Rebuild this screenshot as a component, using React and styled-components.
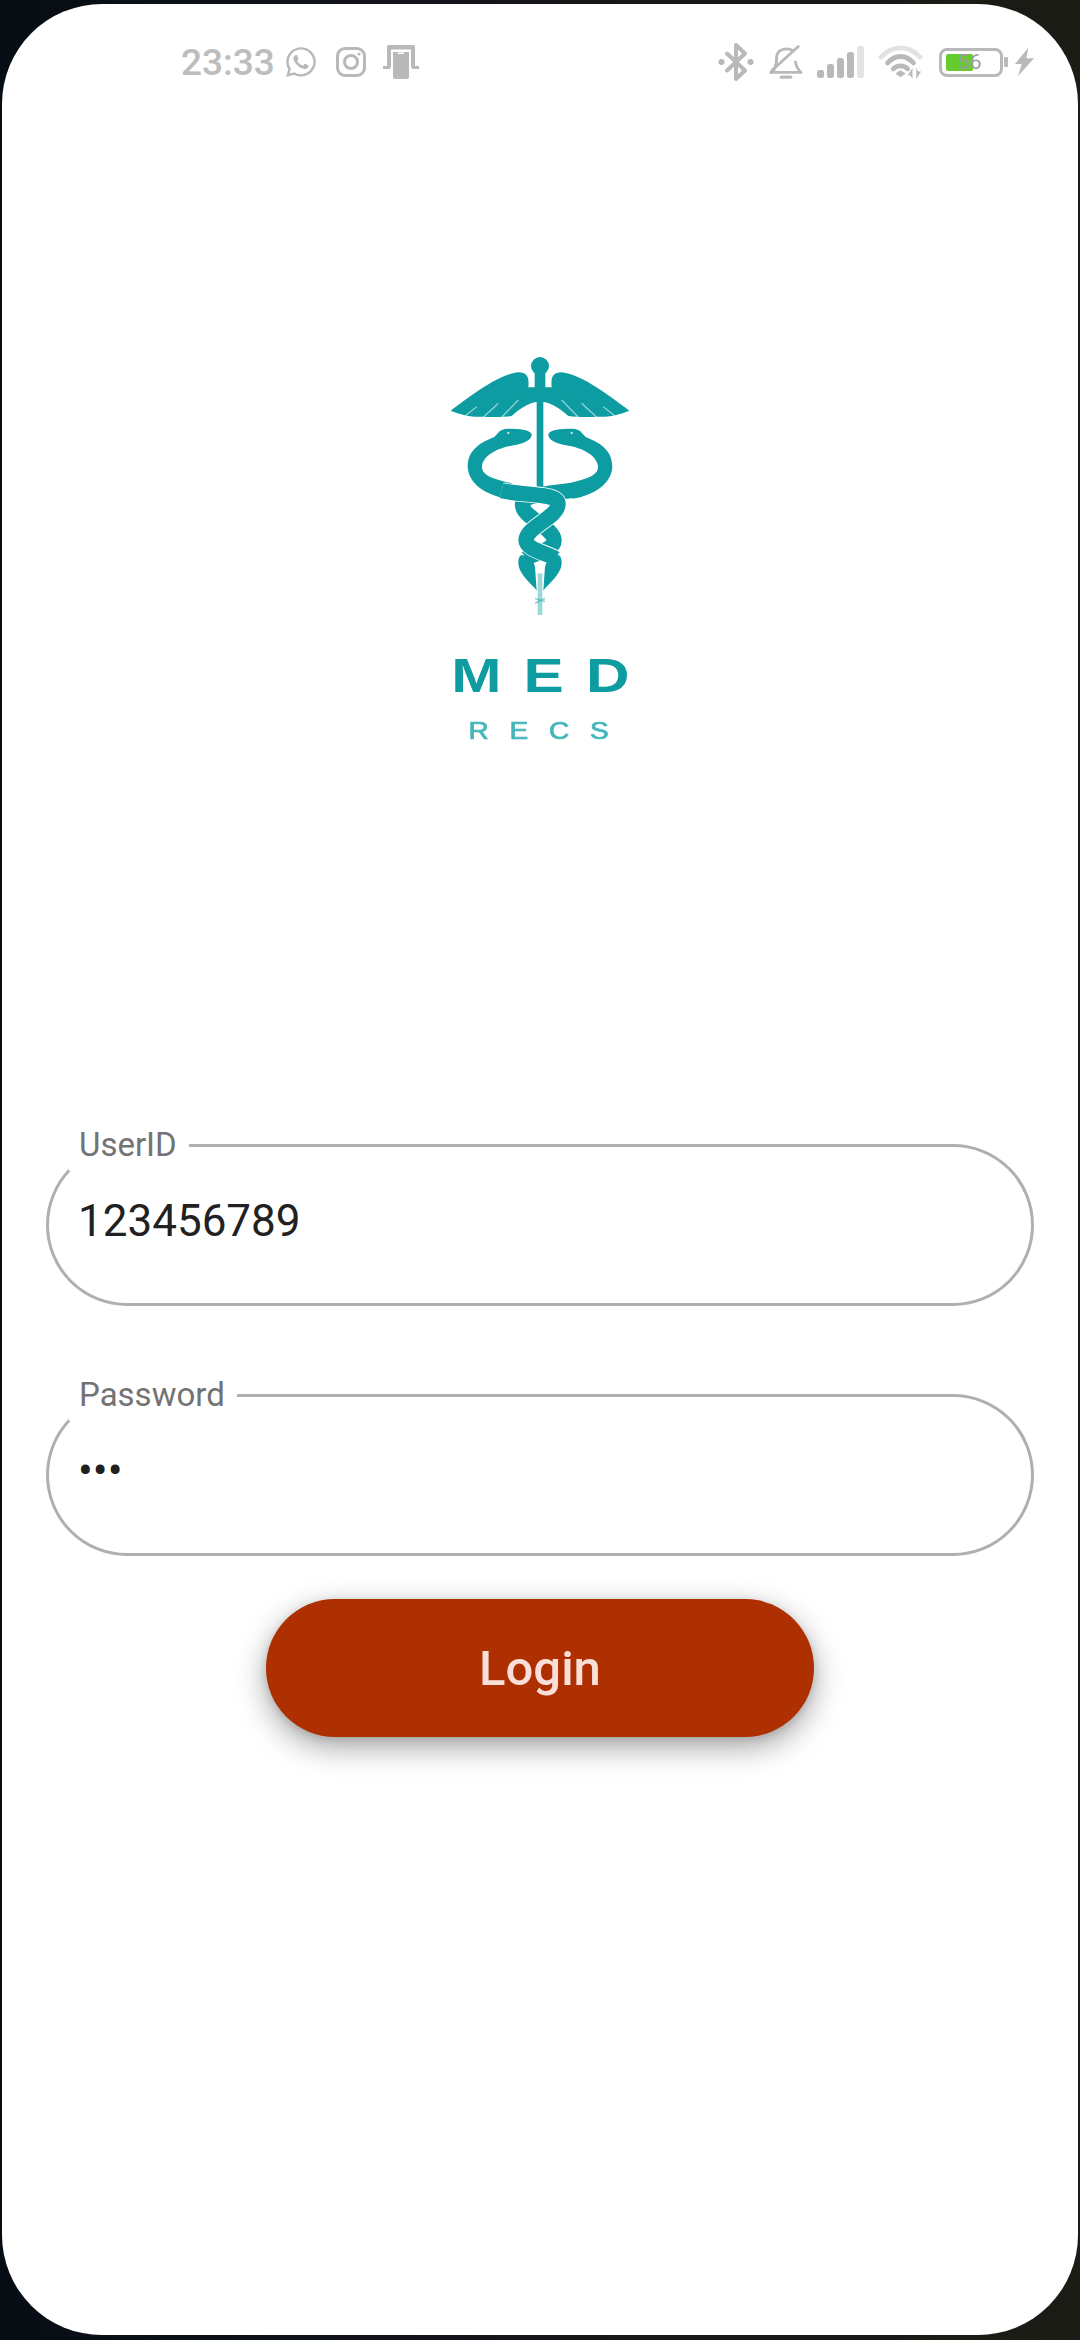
import React from 'react';
import styled, { createGlobalStyle } from 'styled-components';
import { FaWhatsapp } from 'react-icons/fa';

const GlobalStyle = createGlobalStyle`
  html, body {
    margin: 0;
    padding: 0;
    background: #111;
  }
`;

const Phone = styled.div`
  width: 1080px;
  height: 2340px;
  box-sizing: border-box;
  padding: 4px 2px 5px 2px;
  background: linear-gradient(90deg, #070d14 0%, #13151a 40%, #1c1b15 100%);
  font-family: Roboto, 'Liberation Sans', sans-serif;
  overflow: hidden;
`;

const Screen = styled.div`
  height: 100%;
  background: #fff;
  border-radius: 100px;
  display: flex;
  flex-direction: column;
  overflow: hidden;
`;

const StatusBar = styled.div`
  height: 116px;
  flex: none;
  padding: 0 44px 0 179px;
  display: flex;
  align-items: center;
  justify-content: space-between;
  color: #b9b9b9;
`;

const StatusGroup = styled.div`
  display: flex;
  align-items: center;
`;

const Time = styled.span`
  font-size: 37px;
  font-weight: 500;
  margin-right: 9px;
  color: #bdbdbd;
`;

const IconSlot = styled.span`
  display: flex;
  margin-left: ${p => p.$left || 0}px;
  color: #b9b9b9;
`;

const Battery = styled.div`
  position: relative;
  width: 64px;
  height: 29px;
  box-sizing: border-box;
  border: 3px solid #b9b9b9;
  border-radius: 8px;
  padding: 3px 4px;
`;

const BatteryFill = styled.div`
  height: 100%;
  background: #66cc2e;
  border-radius: 2px;
`;

const BatteryLabel = styled.span`
  position: absolute;
  left: 16px;
  top: -3px;
  font-size: 21px;
  line-height: 29px;
  color: #9c9c9c;
`;

const BatteryTip = styled.div`
  width: 4px;
  height: 10px;
  margin-left: 1px;
  background: #b9b9b9;
  border-radius: 1px;
`;

const Brand = styled.div`
  margin-top: 220px;
  display: flex;
  flex-direction: column;
  align-items: center;
  filter: blur(0.7px);
`;

const Emblem = styled.svg`
  display: block;
  width: 240px;
  height: 290px;
`;

const BrandName = styled.div`
  margin-top: 22px;
  margin-left: 4px;
  height: 46px;
  font-family: 'Liberation Sans', sans-serif;
  font-weight: 700;
  font-size: 49px;
  line-height: 46px;
  letter-spacing: 18px;
  margin-right: -18px;
  color: #0f9ca1;
  transform: scaleX(1.23);
`;

const BrandSub = styled.div`
  margin-top: 22px;
  font-family: 'Liberation Sans', sans-serif;
  font-size: 23px;
  line-height: 22px;
  letter-spacing: 17px;
  margin-right: -17px;
  color: #45b6ba;
  transform: scaleX(1.22);
  -webkit-text-stroke: 0.7px #45b6ba;
`;

const Form = styled.form`
  margin-top: 402px;
  padding: 0 44px;
  display: flex;
  flex-direction: column;
  align-items: center;
`;

const Field = styled.div`
  position: relative;
  width: 100%;
  height: 162px;
  box-sizing: border-box;
  margin-bottom: ${p => p.$last ? 43 : 88}px;
  border: 3px solid #b0afad;
  border-radius: 81px;
  padding: 0 0 8px 29px;
  display: flex;
  align-items: center;
`;

const FieldLabel = styled.label`
  position: absolute;
  left: 20px;
  top: -28px;
  height: 52px;
  padding: 0 12px 0 10px;
  background: #fff;
  font-size: 33px;
  line-height: 52px;
  color: #737373;
`;

const FieldValue = styled.div`
  font-size: 44px;
  line-height: 50px;
  color: #212121;
`;

const Dots = styled(FieldValue)`
  margin-top: -1px;
`;

const LoginButton = styled.button`
  width: 548px;
  height: 138px;
  border: none;
  border-radius: 69px;
  background: #ae2f00;
  color: #f9dfd7;
  font-family: inherit;
  font-size: 49px;
  font-weight: 500;
  box-shadow: 0 10px 30px rgba(0, 0, 0, 0.36), 0 2px 8px rgba(0, 0, 0, 0.12);
`;

const Instagram = () => (
  <svg width="30" height="30" viewBox="0 0 30 30" fill="none" stroke="currentColor" strokeWidth="3">
    <rect x="1.5" y="1.5" width="27" height="27" rx="7.5" />
    <circle cx="15" cy="15" r="6.5" />
    <circle cx="23" cy="7" r="1.6" fill="currentColor" stroke="none" />
  </svg>
);

const PhoneCast = () => (
  <svg width="36" height="34" viewBox="0 0 36 34" fill="currentColor">
    <path d="M4 1.5a1.5 1.5 0 0 1 1.5-1.5h25a1.5 1.5 0 0 1 1.5 1.5v21h-4v-18h-20v18h-4z" />
    <rect x="0" y="21" width="7" height="3" />
    <rect x="29" y="21" width="7" height="3" />
    <path d="M10 7h16v25a2 2 0 0 1-2 2h-12a2 2 0 0 1-2-2z" />
    <rect x="15" y="7.5" width="6" height="1.5" fill="#fff" />
  </svg>
);

const Bluetooth = () => (
  <svg width="36" height="40" viewBox="0 0 36 40" fill="none" stroke="currentColor" strokeWidth="4" strokeLinecap="round" strokeLinejoin="round">
    <path d="M18 3v34l9-8.500L9 11.500M18 3l9 8.500L9 28.500" />
    <circle cx="3.500" cy="20" r="3" fill="currentColor" stroke="none" />
    <circle cx="32.500" cy="20" r="3" fill="currentColor" stroke="none" />
  </svg>
);

const BellOff = () => (
  <svg width="34" height="37" viewBox="0 0 36 37" fill="none" stroke="currentColor" strokeWidth="3" strokeLinecap="round" strokeLinejoin="round">
    <path d="M2 29h32c-4-3-5-6-6-11M7 22c1-3 1-5 1-8 0-6 4-10 11-10 2 0 4 .5 5.500 1.500" />
    <path d="M2 29c2-1 4-3 5-7" />
    <path d="M3 27L31 1.500" />
    <path d="M13 34h10" strokeWidth="3.500" />
  </svg>
);

const Signal = () => (
  <svg width="47" height="32" viewBox="0 0 47 32" fill="#b9b9b9">
    <rect x="0" y="24" width="7" height="8" rx="2.500" />
    <rect x="10" y="18" width="7" height="14" rx="2.500" />
    <rect x="20" y="12" width="7" height="20" rx="2.500" />
    <rect x="30" y="6" width="7" height="26" rx="2.500" />
    <rect x="40" y="0" width="7" height="32" rx="2.500" fill="#e4e4e4" />
  </svg>
);

const Wifi = () => (
  <svg width="45" height="36" viewBox="0 0 47 36" fill="none" strokeLinecap="round">
    <path d="M3 13C15 0 32 0 44 13" stroke="#e2e2e2" strokeWidth="5" />
    <path d="M10 19C18 10 29 10 37 19" stroke="#b9b9b9" strokeWidth="5" />
    <path d="M16 25C20 21 27 21 31 25" stroke="#b9b9b9" strokeWidth="5" />
    <path d="M18 30l5.500-3.500 5.500 3.500-5.500 4z" fill="#b9b9b9" />
    <path d="M36 36V24l-5 8h3zM40 24v12l5-8h-3z" fill="#b9b9b9" />
  </svg>
);

const Bolt = () => (
  <svg width="19" height="30" viewBox="0 0 20 30" fill="currentColor">
    <path d="M14 0L0 17h7L3 30l17-19h-8z" />
  </svg>
);

const Strand = ({ d }) => (
  <>
    <path d={d} stroke="#fff" strokeWidth="51" fill="none" />
    <path d={d} stroke="#0d9ca1" strokeWidth="46" fill="none" />
  </>
);

const snakeBody = 'M335 283C330 268 300 266 262 266C240 266 232 282 222 292C190 305 143 325 143 380C145 432 200 466 262 476L275 430C230 418 186 410 186 380C188 350 225 327 270 318C300 314 335 305 335 283Z';

const Caduceus = () => (
  <Emblem viewBox="0 0 720 870">
    <rect x="353" y="700" width="14" height="125" fill="#9ad8da" />
    <circle cx="360" cy="78" r="27" fill="#0d9ca1" />
    <rect x="344" y="95" width="32" height="50" fill="#0d9ca1" />
    <rect x="350" y="140" width="20" height="310" fill="#0d9ca1" />
    <path
      fill="#0d9ca1"
      d="M92 212C150 170 230 105 295 97C322 97 328 112 325 142L395 142C392 112 398 97 425 97C490 105 570 170 628 212C600 225 560 232 535 230C505 232 470 232 445 228C420 205 395 188 365 185L355 185C325 188 300 205 275 228C250 232 215 232 185 230C160 232 120 225 92 212Z"
    />
    <path stroke="#fff" strokeOpacity="0.55" strokeWidth="4" fill="none" d="M135 228L170 200M190 232L235 190M245 232L295 180M585 228L550 200M530 232L485 190M475 232L425 180" />

    <path fill="#0d9ca1" d={snakeBody} />
    <path fill="#0d9ca1" d={snakeBody} transform="matrix(-1 0 0 1 720 0)" />
    <circle cx="265" cy="279" r="3" fill="#fff" />
    <circle cx="455" cy="279" r="3" fill="#fff" />

    <path stroke="#0d9ca1" strokeWidth="46" fill="none" d="M480 448C430 458 320 458 308 490C300 530 400 560 402 600C405 630 340 640 318 655" />
    <Strand d="M245 452C300 466 412 458 414 490C418 530 320 560 318 600C318 630 385 640 405 655" />

    <path fill="#0d9ca1" d="M305 645C325 650 340 660 345 680L350 752L345 745C320 720 295 695 295 670C295 655 298 648 305 645Z" />
    <path fill="#0d9ca1" d="M415 645C395 650 380 660 375 680L370 752L375 745C400 720 425 695 425 670C425 655 422 648 415 645Z" />
    <circle cx="360" cy="510" r="9" fill="#fff" />
    <circle cx="358" cy="600" r="8" fill="#fff" />
    <path stroke="#0d9ca1" strokeOpacity="0.5" strokeWidth="4" fill="none" d="M345 775L375 785M375 775L345 790" />
  </Emblem>
);

const App = () => (
  <>
    <GlobalStyle />
    <Phone>
      <Screen>
        <StatusBar>
          <StatusGroup>
            <Time>23:33</Time>
            <FaWhatsapp size={34} color="#b9b9b9" />
            <IconSlot $left={18}><Instagram /></IconSlot>
            <IconSlot $left={17}><PhoneCast /></IconSlot>
          </StatusGroup>
          <StatusGroup>
            <Bluetooth />
            <IconSlot $left={15}><BellOff /></IconSlot>
            <IconSlot $left={14}><Signal /></IconSlot>
            <IconSlot $left={14}><Wifi /></IconSlot>
            <IconSlot $left={16}>
              <Battery>
                <BatteryFill style={{ width: '54%' }} />
                <BatteryLabel>56</BatteryLabel>
              </Battery>
            </IconSlot>
            <BatteryTip />
            <IconSlot $left={7}><Bolt /></IconSlot>
          </StatusGroup>
        </StatusBar>

        <Brand>
          <Caduceus />
          <BrandName>MED</BrandName>
          <BrandSub>RECS</BrandSub>
        </Brand>

        <Form>
          <Field>
            <FieldLabel>UserID</FieldLabel>
            <FieldValue>123456789</FieldValue>
          </Field>
          <Field $last>
            <FieldLabel>Password</FieldLabel>
            <Dots>•••</Dots>
          </Field>
          <LoginButton type="button">Login</LoginButton>
        </Form>
      </Screen>
    </Phone>
  </>
);

export default App;
